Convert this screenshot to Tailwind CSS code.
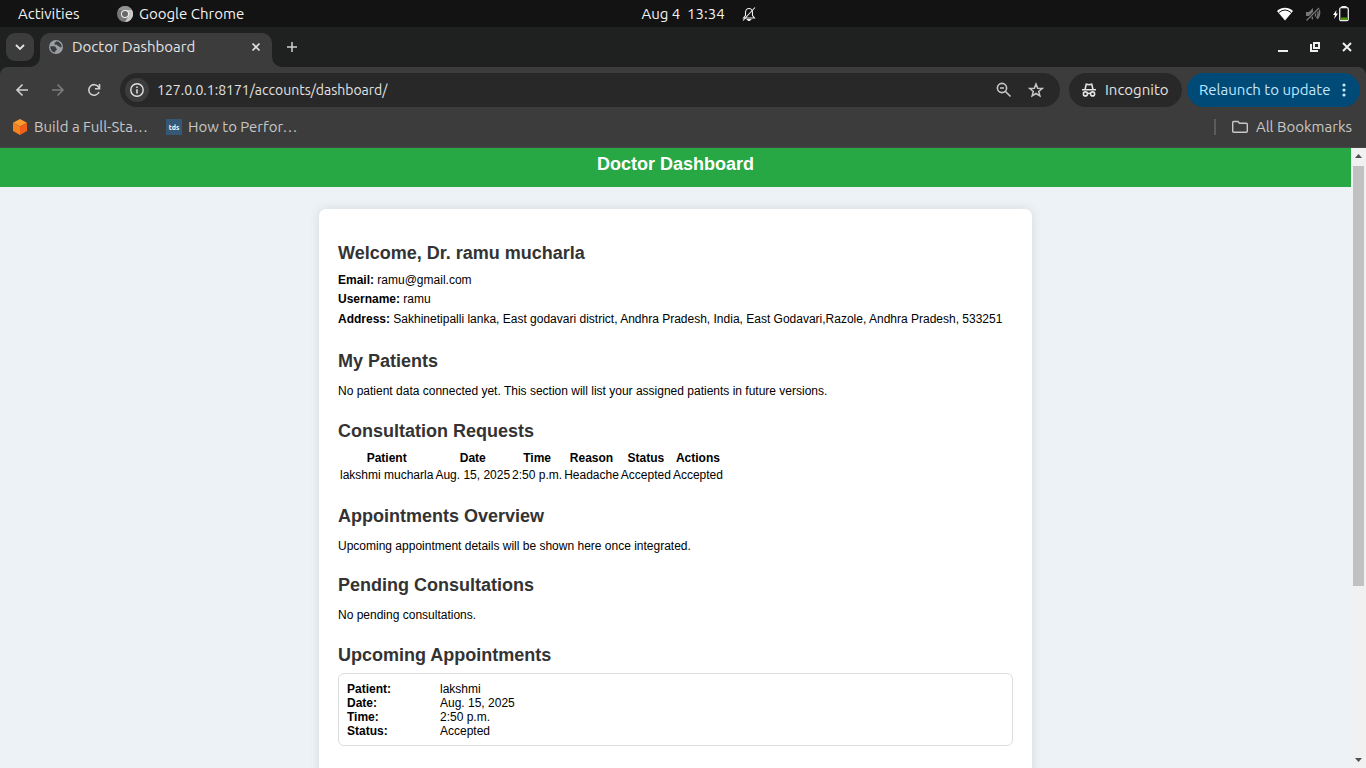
<!DOCTYPE html>
<html lang="en">
<head>
<meta charset="utf-8">
<title>Doctor Dashboard</title>
<script src="https://cdn.jsdelivr.net/npm/@tailwindcss/browser@4"></script>
</head>
<body class="h-screen overflow-hidden flex flex-col bg-[#1f2120] font-['Ubuntu','Noto_Sans',sans-serif] text-[15px] leading-5 text-[#e3e3e3]">

<!-- System bar -->
<header class="h-[27px] shrink-0 bg-[#131313] grid grid-cols-[1fr_auto_1fr] items-center text-[#f2f2f2]">
  <div class="flex items-center pl-[18px]">
    <button class="w-[99px] text-left">Activities</button>
    <button class="flex items-center gap-[6px]">
      <svg class="size-4" viewBox="0 0 16 16"><circle cx="8" cy="8" r="8" fill="#777"/><path d="M8 4h7a8 8 0 0 1-7 12l3.5-6z" fill="#c9c9c9"/><path d="M1.2 4A8 8 0 0 1 15 4H8z" fill="#929292"/><circle cx="8" cy="8" r="4" fill="#eee"/><circle cx="8" cy="8" r="3" fill="#686868"/></svg>
      Google Chrome
    </button>
  </div>
  <div class="flex items-center gap-[17px] pl-[31px]">
    <button class="whitespace-pre">Aug 4  13:34</button>
    <svg class="size-[14px]" viewBox="0 0 14 14" fill="none" stroke="#eee" stroke-width="1.1"><path d="M1.5 11h11l-2-2.500V5.500C10.500 3 9 1.500 7 1.500S3.500 3 3.500 5.500v3z"/><path d="M1 13.500 13 .5"/><path d="M5.500 12.500h3L7 14z" fill="#eee"/></svg>
  </div>
  <div class="flex items-center justify-end pr-[17px] gap-[12px]">
    <svg class="w-4 h-[14px]" viewBox="0 0 16 14"><path d="M0 4C5-.4 11-.4 16 4L8 13.500z" fill="#fff"/><path d="M2 5.500Q8 .5 14 5.500" fill="none" stroke="#131313" stroke-width="1"/></svg>
    <svg class="w-4 h-[14px]" viewBox="0 0 16 14" fill="none" stroke="#777" stroke-width="1.300"><path d="M1 5h3l4-4v12L4 9H1z" fill="#777" stroke="none"/><path d="M10 5q1.500 2 0 4.500M12 3.500q2.500 3.500-.5 7.500M14 2q2 5-1.500 10"/><path d="M1.500 13.500 14 1" stroke="#131313" stroke-width="3"/><path d="M1.500 13.500 14 1"/></svg>
    <svg class="w-4 h-[16px]" viewBox="0 0 16 16"><path d="M3.500 4 0 9h2l-.8 4L5 7.500H3z" fill="#fff"/><rect x="6.700" y="1.700" width="8.600" height="13" rx="1.500" fill="none" stroke="#eee" stroke-width="1.300"/><path d="M8.500 0h5v1.500h-5z" fill="#eee"/><path d="M8 11.500h6V14H8z" fill="#4e9a06"/></svg>
  </div>
</header>

<!-- Tab strip -->
<div class="h-10 shrink-0 flex pl-[6px] pt-[6px]">
  <button aria-label="Search tabs" class="size-7 rounded-[9px] bg-[#3c3c3c] flex items-center justify-center mr-[6px]">
    <svg class="size-[10px]" viewBox="0 0 10 10" fill="none" stroke="#e3e3e3" stroke-width="1.800"><path d="m1 3 4 4 4-4"/></svg>
  </button>
  <div class="relative w-[232px] h-[34px] rounded-t-[10px] bg-[#3c3c3c] flex items-center pl-[9px] pr-[11px] pb-[6px]">
    <svg class="absolute bottom-0 -left-[10px] size-[10px]" viewBox="0 0 10 10"><path d="M10 0v10H0A10 10 0 0 0 10 0" fill="#3c3c3c"/></svg>
    <svg class="absolute bottom-0 -right-[10px] size-[10px]" viewBox="0 0 10 10"><path d="M0 0v10h10A10 10 0 0 1 0 0" fill="#3c3c3c"/></svg>
    <svg class="size-[14px] mr-[9px]" viewBox="0 0 14 14"><circle cx="7" cy="7" r="7" fill="#9aa0a6"/><path d="M7.500 1.300C6.800 2.200 5.300 2.500 5.500 4c.2 1 1.500.8 2.500.8.500 1.500 2 1 2.500 2 .6 1 1.500.4 2.200.2A5.700 5.700 0 0 0 7.500 1.300M1.300 6.300h4c1.200 0 1.700 1 1.500 2 1.200 0 1.200 1 .8 1.700-.5.600-1.600.7-1.600 2.600A5.700 5.700 0 0 1 1.300 6.300" fill="#3c3c3c"/></svg>
    <span class="flex-1 truncate">Doctor Dashboard</span>
    <button aria-label="Close tab"><svg class="size-[10px]" viewBox="0 0 10 10" stroke="#e3e3e3" stroke-width="1.600"><path d="m1.500 1.500 7 7m0-7-7 7"/></svg></button>
  </div>
  <button aria-label="New tab" class="size-7 ml-[6px] flex items-center justify-center"><svg class="size-[10px]" viewBox="0 0 10 10" stroke="#d0d0d0" stroke-width="1.500"><path d="M5 0v10M0 5h10"/></svg></button>
  <div class="ml-auto flex items-center gap-[22px] pr-[14px] pb-[6px]">
    <button aria-label="Minimize"><svg class="size-[10px]" viewBox="0 0 10 10"><path d="M0 8h10v2H0z" fill="#eee"/></svg></button>
    <button aria-label="Restore"><svg class="size-[10px]" viewBox="0 0 10 10" fill="none" stroke="#eee" stroke-width="2"><path d="M4 1h5v5H4zM1 2v7h7"/></svg></button>
    <button aria-label="Close window"><svg class="size-[10px]" viewBox="0 0 10 10" stroke="#eee" stroke-width="2"><path d="m1 1 8 8m0-8L1 9"/></svg></button>
  </div>
</div>

<!-- Toolbar and bookmarks -->
<div class="shrink-0 rounded-t-[8px] bg-[#3c3c3c] border-b border-[#474747]">
  <div class="flex items-center pt-[6px] pl-[15px] pr-[6px]">
    <div class="flex gap-[22px] w-[105px]">
      <button aria-label="Back"><svg class="size-[14px]" viewBox="0 0 14 14" fill="none" stroke="#d0d0d0" stroke-width="1.600"><path d="M13 7H2m5.500-5.500L2 7l5.500 5.500"/></svg></button>
      <button aria-label="Forward" disabled><svg class="size-[14px]" viewBox="0 0 14 14" fill="none" stroke="#7c7c7c" stroke-width="1.600"><path d="M1 7h11M6.500 1.500 12 7l-5.500 5.500"/></svg></button>
      <button aria-label="Reload"><svg class="size-[14px]" viewBox="0 0 14 14" fill="none" stroke="#d0d0d0" stroke-width="1.600"><path d="M12 9A5.300 5.300 0 1 1 11.500 4L12.500 5.500M12.500 1v4.700H8"/></svg></button>
    </div>
    <div class="flex-1 h-[34px] rounded-full bg-[#282828] flex items-center pl-[5px] pr-[16px]">
      <button aria-label="Site information" class="size-6 rounded-full bg-[#3c3c3c] flex items-center justify-center mr-[8px]"><svg class="size-[14px]" viewBox="0 0 14 14" fill="none" stroke="#e3e3e3"><circle cx="7" cy="7" r="6.200" stroke-width="1.400"/><path d="M7 6.300V10.500M7 3.500V5" stroke-width="1.500"/></svg></button>
      <input aria-label="Address" value="127.0.0.1:8171/accounts/dashboard/" class="flex-1 min-w-0 bg-transparent outline-none text-sm">
      <button aria-label="Zoom" class="mr-[16px]"><svg class="size-4" viewBox="0 0 16 16" fill="none" stroke="#c7c7c7" stroke-width="1.600"><circle cx="6" cy="6" r="4.600"/><path d="m9.500 9.500 5 5M4 6h4"/></svg></button>
      <button aria-label="Bookmark this tab"><svg class="size-4" viewBox="0 0 16 16" fill="none" stroke="#c7c7c7" stroke-width="1.500"><path d="m8 2 1.700 4.200 4.500.3-3.500 2.900 1.200 4.500L8 11.500l-3.900 2.400 1.200-4.500L1.800 6.500l4.500-.3z"/></svg></button>
    </div>
    <button class="h-[34px] w-[113px] ml-[9px] mr-[5px] rounded-full bg-[#282828] flex items-center pl-[12px] gap-[8px]">
      <svg class="size-4 shrink-0" viewBox="0 0 16 16" fill="none" stroke="#e3e3e3" stroke-width="1.600"><path d="M1 7.700h14M4 7.500 5.300 2.100 8 2.700l2.700-.6L12 7.500"/><circle cx="4.400" cy="11.900" r="2"/><circle cx="11.600" cy="11.900" r="2"/><path d="M6.400 11.400h3.200"/></svg>
      Incognito
    </button>
    <button class="h-[34px] w-[173px] rounded-full bg-[#004a77] text-[#c2e7ff] flex items-center justify-between pl-[12px] pr-[14px]">
      <span class="whitespace-nowrap">Relaunch to update</span>
      <svg class="w-1 h-[14px]" viewBox="0 0 4 14" fill="#c2e7ff"><circle cx="2" cy="2" r="1.600"/><circle cx="2" cy="7" r="1.600"/><circle cx="2" cy="12" r="1.600"/></svg>
    </button>
  </div>
  <div class="h-10 flex items-center pl-[12px] pr-[14px] text-[#c7c7c7]">
    <a href="#" class="flex items-center gap-[6px] w-[154px] whitespace-nowrap">
      <svg class="size-4" viewBox="0 0 16 16"><path d="M8 0 15 3.800 8 7.500 1 3.800z" fill="#ff9a2e"/><path d="M1 3.800 8 7.500V16L1 12z" fill="#f58220"/><path d="M15 3.800 8 7.500V16l7-4z" fill="#f06018"/></svg>
      Build a Full-Sta…
    </a>
    <a href="#" class="flex items-center gap-[6px] whitespace-nowrap">
      <span class="size-4 bg-[#355876] text-white text-[7px] leading-4 font-bold text-center">tds</span>
      How to Perfor…
    </a>
    <span class="ml-auto mr-[16px] w-[2px] h-4 bg-[#5c5c5c]"></span>
    <a href="#" class="flex items-center gap-[8px]">
      <svg class="size-4" viewBox="0 0 16 16" fill="none" stroke="#c7c7c7" stroke-width="1.400"><path d="M.7 3.500q0-1 1-1H6l1.500 1.700h6.800q1 0 1 1v7q0 1-1 1H1.700q-1 0-1-1z"/></svg>
      All Bookmarks
    </a>
  </div>
</div>

<!-- Page -->
<div class="flex-1 min-h-0 flex">
  <div class="flex-1 min-w-0 overflow-hidden bg-[#edf2f6] font-['Liberation_Sans',sans-serif] text-xs leading-[14px] text-black">
    <div class="bg-[#28a745] h-[39px] pt-[6px] text-center"><h1 class="text-white font-bold text-lg leading-5">Doctor Dashboard</h1></div>
    <main class="mt-[22px] mx-auto max-w-[713px] rounded-[7px] bg-white shadow-[0_0_11px_rgba(0,0,0,0.1)] pt-[34px] px-[19px] pb-[60px]">
      <section>
        <h2 class="text-lg leading-5 font-bold text-[#333]">Welcome, Dr. ramu mucharla</h2>
        <div class="mt-[10px] flex flex-col gap-[5px]">
          <p><strong>Email:</strong> ramu@gmail.com</p>
          <p><strong>Username:</strong> ramu</p>
          <p class="pt-px"><strong>Address:</strong> Sakhinetipalli lanka, East godavari district, Andhra Pradesh, India, East Godavari,Razole, Andhra Pradesh, 533251</p>
        </div>
      </section>
      <section class="mt-[25px]">
        <h2 class="text-lg leading-5 font-bold text-[#333]">My Patients</h2>
        <p class="mt-[13px]">No patient data connected yet. This section will list your assigned patients in future versions.</p>
      </section>
      <section class="mt-[23px]">
        <h2 class="text-lg leading-5 font-bold text-[#333]">Consultation Requests</h2>
        <table class="mt-[8px] border-separate border-spacing-x-[2px] border-spacing-y-px">
          <thead><tr><th class="py-px">Patient</th><th class="py-px">Date</th><th class="py-px">Time</th><th class="py-px">Reason</th><th class="py-px">Status</th><th class="py-px">Actions</th></tr></thead>
          <tbody><tr><td class="py-px">lakshmi mucharla</td><td class="py-px">Aug. 15, 2025</td><td class="py-px">2:50 p.m.</td><td class="py-px">Headache</td><td class="py-px">Accepted</td><td class="py-px">Accepted</td></tr></tbody>
        </table>
      </section>
      <section class="mt-[22px]">
        <h2 class="text-lg leading-5 font-bold text-[#333]">Appointments Overview</h2>
        <p class="mt-[13px]">Upcoming appointment details will be shown here once integrated.</p>
      </section>
      <section class="mt-[22px]">
        <h2 class="text-lg leading-5 font-bold text-[#333]">Pending Consultations</h2>
        <p class="mt-[13px]">No pending consultations.</p>
      </section>
      <section class="mt-[23px]">
        <h2 class="text-lg leading-5 font-bold text-[#333]">Upcoming Appointments</h2>
        <dl class="mt-[8px] grid grid-cols-[93px_1fr] rounded-[6px] border border-[#ddd] pt-[8px] pb-[7px] px-[8px]">
          <dt class="font-bold">Patient:</dt><dd>lakshmi</dd>
          <dt class="font-bold">Date:</dt><dd>Aug. 15, 2025</dd>
          <dt class="font-bold">Time:</dt><dd>2:50 p.m.</dd>
          <dt class="font-bold">Status:</dt><dd>Accepted</dd>
        </dl>
      </section>
    </main>
  </div>
  <!-- Scroll bar -->
  <div class="w-[15px] shrink-0 bg-[#f1f1f1] flex flex-col items-center">
    <svg class="w-[7px] h-[18px] shrink-0" viewBox="0 0 7 18"><path d="M0 10h7L3.500 6z" fill="#505050"/></svg>
    <div class="flex-1 w-full px-[2px]"><div class="h-[72%] bg-[#c1c1c1]"></div></div>
    <svg class="w-[7px] h-[18px] shrink-0" viewBox="0 0 7 18"><path d="M0 8h7l-3.500 4z" fill="#505050"/></svg>
  </div>
</div>
</body>
</html>
